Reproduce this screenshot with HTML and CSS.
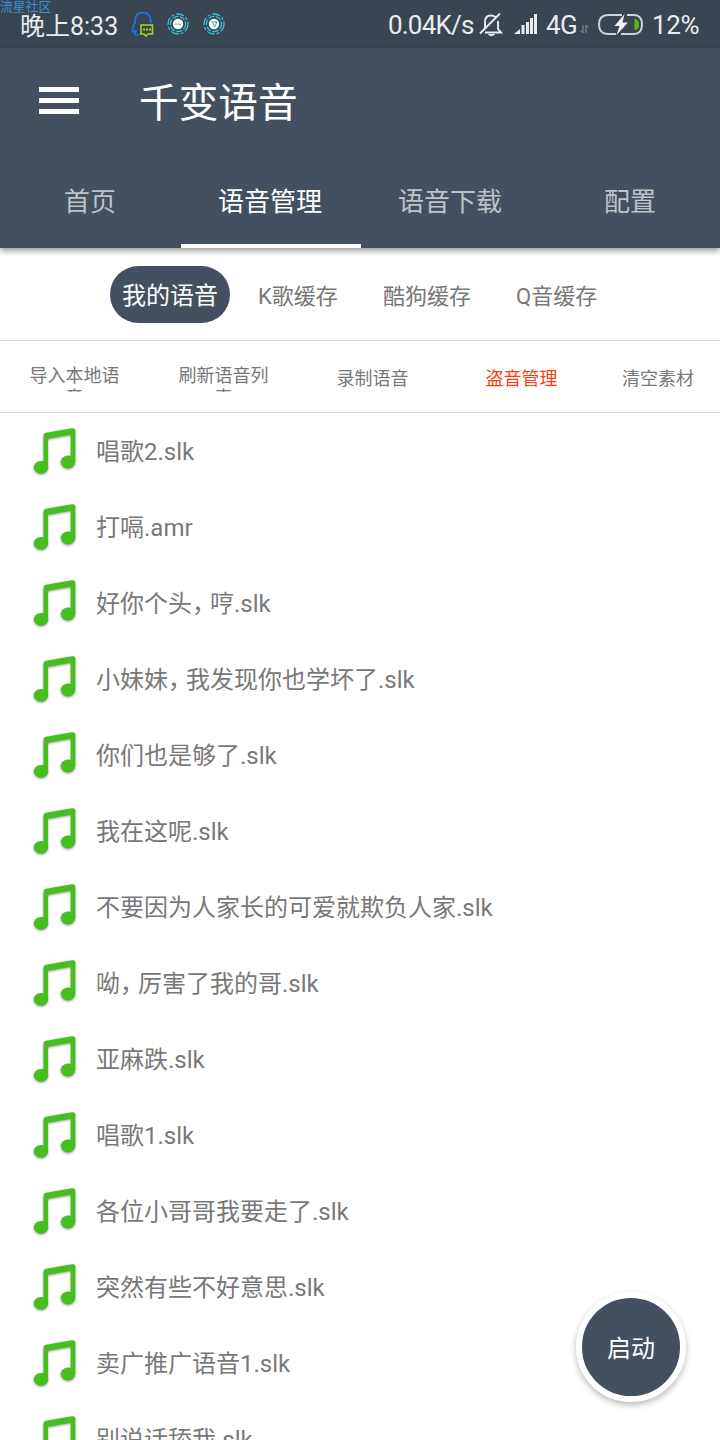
FILE: index.html
```html
<!DOCTYPE html>
<html lang="zh-CN">
<head>
<meta charset="utf-8">
<title>千变语音</title>
<link rel="stylesheet" href="styles.css">
</head>
<body>
<svg class="defs" width="0" height="0" aria-hidden="true">
  <defs>
    <symbol id="note" viewBox="0 0 48 52">
      <path d="M11.500 8.500Q11.500 6.200 14 5.700L40 1.200Q43.300 .8 43.300 3.500V35H38.700V7.800L16 11.800V40H11.500Z"/>
      <ellipse cx="9" cy="40.300" rx="7.200" ry="6.400"/>
      <ellipse cx="36" cy="35" rx="7.200" ry="6.400"/>
    </symbol>
  </defs>
</svg>
<div class="screen">
  <div class="watermark">流星社区</div>
  <div class="status">
    <span class="clock">晚上8:33</span>
    <svg class="ic-qq" width="24" height="27" viewBox="0 0 24 27" fill="none">
      <path d="M8.500 23Q6 25 4 23L5 20Q3 20 2 21Q0 18 4 12V9Q5 1.500 11.500 1.500Q19 1.500 19.500 9L20 12" stroke="#0b7bff" stroke-width="1.600"/>
      <path d="M10 14H21.500V23H17L15 25L13 23H10Z" stroke="#a6d41c" stroke-width="1.600"/>
      <path d="M12 18.500H20" stroke="#a6d41c" stroke-width="2" stroke-dasharray="2 1"/>
    </svg>
    <svg class="ic-ring" width="22" height="22" viewBox="0 0 22 22" fill="none">
      <circle cx="11" cy="11" r="10" stroke="#35c3df" stroke-width="1.300" stroke-dasharray="8 2 3 2"/>
      <circle cx="11" cy="11" r="7.600" stroke="#35c3df" stroke-width="1.300" stroke-dasharray="6 1.500"/>
      <circle cx="11" cy="11" r="5.200" fill="#fff"/>
      <path d="M7.500 12L9 10.500L10.500 12L12 10.500L13 12L14.500 10.500" stroke="#2aabc8" stroke-width=".8"/>
    </svg>
    <svg class="ic-ring" width="22" height="22" viewBox="0 0 22 22" fill="none">
      <circle cx="11" cy="11" r="10" stroke="#35c3df" stroke-width="1.300" stroke-dasharray="8 2 3 2"/>
      <circle cx="11" cy="11" r="7.600" stroke="#35c3df" stroke-width="1.300" stroke-dasharray="6 1.500"/>
      <circle cx="11" cy="11" r="5.200" fill="#fff"/>
      <path d="M8 9H14L11.500 14L10 10" stroke="#2aabc8"/>
    </svg>
    <span class="speed">0.04K/s</span>
    <svg class="ic-bell" width="24" height="25" viewBox="0 0 24 25" fill="none" stroke="#e9ebed" stroke-width="1.900">
      <path d="M6 17V10Q6 3.500 12 3.500Q14.500 3.500 16.500 5M19 9V17L22 20.500H6M1 21.500L21 1.500"/>
      <path d="M9.500 22.500H15.500Q12.500 25 9.500 22.500Z" fill="#e9ebed" stroke-width="1"/>
    </svg>
    <svg class="ic-signal" width="24" height="21" viewBox="0 0 24 21" fill="#e9ebed">
      <path d="M0 20L6 15V20ZM7.500 11H10.500V20H7.500ZM12 8H15V20H12ZM16 4H19V20H16ZM20 0H23V20H20Z"/>
    </svg>
    <span class="net">4G</span>
    <svg class="ic-data" width="9" height="10" viewBox="0 0 9 10" fill="none" stroke="#84909b"><path d="M3 1V9L.5 6.500M6 9V1L8.500 3.500"/></svg>
    <svg class="ic-battery" width="47" height="23" viewBox="0 0 47 23" fill="none">
      <path d="M25 2H11Q2 2 2 11.500Q2 21 11 21H19M30 2H37Q45 2 45 11.500Q45 21 37 21H24" stroke="#cfd4d8" stroke-width="2"/>
      <path d="M27.500 1L17.500 13H22.500L19.500 22L31 9.500H25.500Z" fill="#f1f2f3"/>
      <path d="M37.500 6H38.500Q42 7 42 11.500Q42 16 38.500 17H37.500Z" fill="#4fc200"/>
    </svg>
    <span class="percent">12%</span>
  </div>

  <header class="header">
    <div class="titlebar">
      <span class="menu"><i></i><i></i><i></i></span>
      <h1 class="title">千变语音</h1>
    </div>
    <nav class="tabs">
      <a class="tab">首页</a>
      <a class="tab active">语音管理</a>
      <a class="tab">语音下载</a>
      <a class="tab">配置</a>
    </nav>
  </header>

  <div class="sources">
    <span class="pill">我的语音</span>
    <span class="source k">K歌缓存</span>
    <span class="source kugou">酷狗缓存</span>
    <span class="source q">Q音缓存</span>
  </div>

  <div class="actions">
    <div class="action two"><span>导入本地语音</span></div>
    <div class="action two"><span>刷新语音列表</span></div>
    <div class="action">录制语音</div>
    <div class="action hot">盗音管理</div>
    <div class="action last">清空素材</div>
  </div>

  <ul class="list">
    <li class="row"><svg class="note"><use href="#note"/></svg><span>唱歌2.slk</span></li>
    <li class="row"><svg class="note"><use href="#note"/></svg><span>打嗝.amr</span></li>
    <li class="row"><svg class="note"><use href="#note"/></svg><span>好你个头<b class="comma">，</b>哼.slk</span></li>
    <li class="row"><svg class="note"><use href="#note"/></svg><span>小妹妹<b class="comma">，</b>我发现你也学坏了.slk</span></li>
    <li class="row"><svg class="note"><use href="#note"/></svg><span>你们也是够了.slk</span></li>
    <li class="row"><svg class="note"><use href="#note"/></svg><span>我在这呢.slk</span></li>
    <li class="row"><svg class="note"><use href="#note"/></svg><span>不要因为人家长的可爱就欺负人家.slk</span></li>
    <li class="row"><svg class="note"><use href="#note"/></svg><span>呦<b class="comma">，</b>厉害了我的哥.slk</span></li>
    <li class="row"><svg class="note"><use href="#note"/></svg><span>亚麻跌.slk</span></li>
    <li class="row"><svg class="note"><use href="#note"/></svg><span>唱歌1.slk</span></li>
    <li class="row"><svg class="note"><use href="#note"/></svg><span>各位小哥哥我要走了.slk</span></li>
    <li class="row"><svg class="note"><use href="#note"/></svg><span>突然有些不好意思.slk</span></li>
    <li class="row"><svg class="note"><use href="#note"/></svg><span>卖广推广语音1.slk</span></li>
    <li class="row"><svg class="note"><use href="#note"/></svg><span>别说话舔我.slk</span></li>
  </ul>
  <button class="fab">启动</button>
</div>
</body>
</html>
```
FILE: styles.css
```css
* { box-sizing: border-box; }
body {
  margin: 0;
  background: #fff;
  font-family: Roboto, "Noto Sans CJK SC", sans-serif;
  color: #787878;
}
.defs { position: absolute; }
.screen {
  position: relative;
  width: 720px;
  height: 1440px;
  overflow: hidden;
  display: flex;
  flex-direction: column;
}
.watermark {
  position: absolute;
  left: 0;
  top: 0;
  font-size: 12.800px;
  line-height: 13px;
  color: #3590dc;
}
.status {
  flex: none;
  height: 48px;
  padding: 0 20px;
  display: flex;
  align-items: center;
  background: #3a4552;
  color: #e9ebed;
  font-size: 26px;
  line-height: 48px;
  white-space: nowrap;
}
.status svg { flex: none; }
.clock { width: 111px; font-size: 25px; padding-top: 5px; }
.ic-qq { margin-right: 12px; }
.ic-ring { margin-right: 14px; }
.speed { width: 91px; margin-left: 149px; padding-top: 2px; letter-spacing: -.8px; }
.ic-bell { margin-right: 11px; }
.ic-signal { margin-right: 8px; }
.net { width: 34px; padding-top: 2px; letter-spacing: -.6px; }
.ic-data { margin: 10px 8px 0 0; }
.ic-battery { margin-right: 8px; }
.percent { padding-top: 2px; letter-spacing: -.4px; }
.header {
  flex: none;
  height: 200px;
  background: #445060;
  color: #fff;
  box-shadow: 0 3px 6px rgba(0, 0, 0, .4);
}
.titlebar {
  height: 104px;
  padding-left: 39px;
  display: flex;
  align-items: center;
}
.menu {
  width: 40px;
  height: 27px;
  display: flex;
  flex-direction: column;
  justify-content: space-between;
}
.menu i { height: 5px; background: #fff; }
.title { margin: 0 0 0 60px; padding-top: 8px; font-size: 39.700px; font-weight: 400; line-height: 56px; }
.tabs { display: grid; grid-template-columns: repeat(4, 1fr); height: 96px; }
.tab {
  height: 96px;
  text-align: center;
  font-size: 26px;
  line-height: 101px;
  color: #bfc2c6;
}
.tab.active { color: #fff; border-bottom: 4px solid #fff; margin: 0 -1px 0 1px; padding-right: 2px; }
.sources {
  flex: none;
  height: 93px;
  padding: 18px 0 0 110px;
  display: flex;
  border-bottom: 1px solid #dcdcdc;
  font-size: 22px;
  line-height: 62px;
}
.pill {
  width: 120px;
  height: 57px;
  border-radius: 29px;
  background: #445060;
  color: #fff;
  font-size: 24px;
  line-height: 60px;
  text-align: center;
}
.k { margin-left: 28px; width: 125px; }
.kugou { width: 133px; }
.actions {
  flex: none;
  height: 72px;
  display: grid;
  grid-template-columns: repeat(4, 149px) 1fr;
  border-bottom: 1px solid #dcdcdc;
  text-align: center;
  font-size: 18px;
  line-height: 75px;
}
.action.two { padding: 24px 28px 0; line-height: 22px; }
.action.two span { display: block; height: 27px; overflow: hidden; }
.action.hot { color: #ff3c0a; }
.list { list-style: none; margin: 0; padding: 1px 0 0; }
.row {
  height: 76px;
  padding-left: 32px;
  display: flex;
  align-items: center;
  font-size: 24px;
  line-height: 36px;
  white-space: nowrap;
}
.note {
  width: 48px;
  height: 52px;
  margin: 2px 16px 0 0;
  fill: #46bf1e;
  filter: drop-shadow(0 1px 1px rgba(0, 0, 0, .4));
}
.comma { font-weight: 400; letter-spacing: -6px; }
.fab {
  position: absolute;
  left: 576px;
  top: 1292px;
  width: 110px;
  height: 110px;
  padding: 0 0 2px;
  border: 6px solid #fff;
  border-radius: 50%;
  background: #445060;
  color: #fff;
  font: 24px Roboto, "Noto Sans CJK SC", sans-serif;
  box-shadow: 0 3px 6px rgba(0, 0, 0, .28);
}
```
